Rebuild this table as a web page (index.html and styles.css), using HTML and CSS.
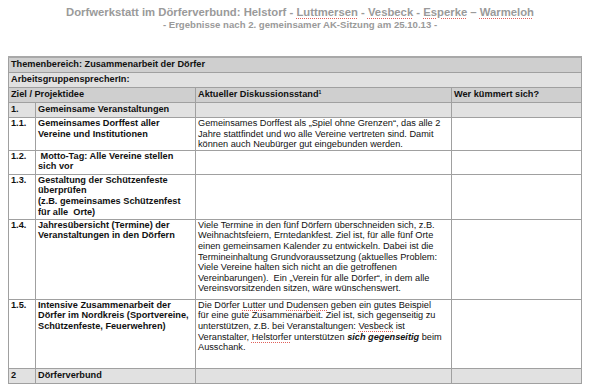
FILE: index.html
```html
<!DOCTYPE html>
<html lang="de">
<head>
<meta charset="utf-8">
<title>Dorfwerkstatt</title>
<link rel="stylesheet" href="styles.css">
</head>
<body>
<header class="head">
  <h1 class="title">Dorfwerkstatt im Dörferverbund: Helstorf - <span class="sp">Luttmersen</span> - <span class="sp">Vesbeck</span> - <span class="sp">Esperke</span> – <span class="sp">Warmeloh</span></h1>
  <p class="subtitle">- Ergebnisse nach 2. gemeinsamer AK-Sitzung am 25.10.13 -</p>
</header>
<main class="sheet">
<table class="grid">
  <colgroup>
    <col class="c-num"><col class="c-goal"><col class="c-status"><col class="c-who">
  </colgroup>
  <tr class="dark"><td colspan="4" class="b">Themenbereich: Zusammenarbeit der Dörfer</td></tr>
  <tr class="light"><td colspan="4" class="b">ArbeitsgruppensprecherIn:</td></tr>
  <tr class="dark">
    <td colspan="2" class="b">Ziel / Projektidee</td>
    <td class="b">Aktueller Diskussionsstand<sup class="fn">1</sup></td>
    <td class="b">Wer kümmert sich?</td>
  </tr>
  <tr class="light">
    <td class="b">1.</td><td class="b">Gemeinsame Veranstaltungen</td><td></td><td></td>
  </tr>
  <tr class="r11">
    <td class="b">1.1.</td>
    <td class="b">Gemeinsames Dorffest aller<br>Vereine und Institutionen</td>
    <td>Gemeinsames Dorffest als „Spiel ohne Grenzen“, das alle 2 Jahre stattfindet und wo alle Vereine vertreten sind. Damit können auch Neubürger gut eingebunden werden.</td>
    <td></td>
  </tr>
  <tr class="r12">
    <td class="b">1.2.</td>
    <td class="b">&nbsp;Motto-Tag: Alle Vereine stellen<br>sich vor</td>
    <td></td><td></td>
  </tr>
  <tr class="r13">
    <td class="b">1.3.</td>
    <td class="b">Gestaltung der Schützenfeste<br>überprüfen<br>(z.B. gemeinsames Schützenfest<br>für alle&nbsp; Orte)</td>
    <td></td><td></td>
  </tr>
  <tr class="r14">
    <td class="b">1.4.</td>
    <td class="b">Jahresübersicht (Termine) der<br>Veranstaltungen in den Dörfern</td>
    <td>Viele Termine in den fünf Dörfern überschneiden sich, z.B. Weihnachtsfeiern, Erntedankfest. Ziel ist, für alle fünf Orte einen gemeinsamen Kalender zu entwickeln. Dabei ist die Termineinhaltung Grundvoraussetzung (aktuelles Problem: Viele Vereine halten sich nicht an die getroffenen Vereinbarungen).&nbsp; Ein „Verein für alle Dörfer“, in dem alle Vereinsvorsitzenden sitzen, wäre wünschenswert.</td>
    <td></td>
  </tr>
  <tr class="r15">
    <td class="b">1.5.</td>
    <td class="b nw">Intensive Zusammenarbeit der<br>Dörfer im Nordkreis (Sportvereine,<br>Schützenfeste, Feuerwehren)</td>
    <td>Die Dörfer <span class="sp">Lutter</span> und <span class="sp">Dudensen</span> geben ein gutes Beispiel<br>für eine gute Zusammenarbeit. Ziel ist, sich gegenseitig zu unterstützen, z.B. bei Veranstaltungen: <span class="sp">Vesbeck</span> ist Veranstalter, <span class="sp">Helstorfer</span> unterstützen <b class="em">sich gegenseitig</b> beim Ausschank.</td>
    <td></td>
  </tr>
  <tr class="light">
    <td class="b">2</td><td class="b">Dörferverbund</td><td></td><td></td>
  </tr>
</table>
</main>
</body>
</html>
```
FILE: styles.css
```css
html, body {
  margin: 0;
  padding: 0;
  background: #ffffff;
}
body {
  font-family: "Liberation Sans", Arial, sans-serif;
  color: #111;
}
.head {
  text-align: center;
  padding-top: 5px;
  height: 56px;
  box-sizing: border-box;
}
.title {
  margin: 0;
  font-size: 11.3px;
  line-height: 14px;
  font-weight: bold;
  color: #9a9a9a;
}
.subtitle {
  margin: 0;
  font-size: 9.6px;
  line-height: 12px;
  font-weight: bold;
  color: #9a9a9a;
}
.sp {
  text-decoration: underline dotted #e0605a;
  text-decoration-thickness: 1px;
  text-underline-offset: 2px;
}
.em {
  font-style: italic;
}
.sheet {
  padding: 0 19px 0 8px;
}
.grid {
  width: 573px;
  border-collapse: collapse;
  table-layout: fixed;
  font-size: 9.2px;
  line-height: 10.6px;
  border-top: 2px solid #a8a8a8;
}
.c-num { width: 27px; }
.c-goal { width: 160px; }
.c-status { width: 256px; }
.c-who { width: 130px; }
.grid td {
  border: 1px solid #a0a0a0;
  padding: 0 1px 0 2px;
  vertical-align: top;
  overflow: hidden;
}
.grid td.b { font-weight: bold; }
.grid td.nw { white-space: nowrap; overflow: visible; }
.dark td, .light td { height: 13px; padding-top: 1px; }
.dark td { background: #cfcfcf; }
.light td { background: #e1e1e1; }
.fn { display: inline-block; font-size: 5px; vertical-align: top; line-height: 6px; }
.r11 td { height: 31px; }
.r12 td { height: 23px; }
.r13 td { height: 44px; }
.r14 td { height: 79px; }
.r15 td { height: 68px; }
```
